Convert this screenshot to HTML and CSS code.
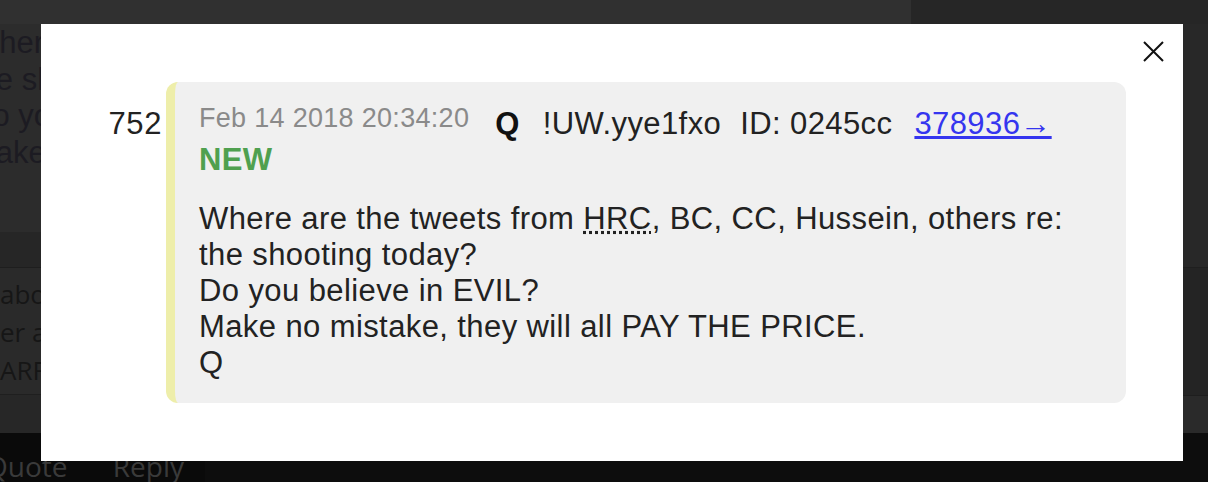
FILE: index.html
```html
<!DOCTYPE html>
<html lang="en">
<head>
    <meta charset="UTF-8">
    <meta name="viewport" content="width=device-width, initial-scale=1.0">
    <title>Q Post 752</title>
    <link rel="stylesheet" href="styles.css">
</head>
<body>
    <div class="page">
        <div class="topbar">
            <div class="topbar-main"></div>
            <div class="topbar-side"></div>
        </div>
        <div class="thread">
            <div class="thread-main">
                <div class="bg-post">
                    <div>Where are the tweets from HRC, BC, CC, Hussein, others re:</div>
                    <div>the shooting today?</div>
                    <div>Do you believe in EVIL?</div>
                    <div>Make no mistake, they will all PAY THE PRICE.</div>
                </div>
                <div class="bg-band"></div>
                <div class="bg-rows">
                    <div>about this post</div>
                    <div>er all the drops</div>
                    <div>ARFCOM thread</div>
                </div>
                <div class="bg-foot"></div>
            </div>
            <div class="thread-side">
                <div class="side-top"></div>
                <div class="side-mid"></div>
                <div class="side-foot"></div>
            </div>
        </div>
        <div class="bottombar">
            <div class="bar-actions">
                <span class="bar-quote">Quote</span>
                <span class="bar-reply">Reply</span>
            </div>
        </div>
    </div>

    <div class="modal">
        <button class="close" aria-label="Close">
            <svg width="21" height="21" viewBox="0 0 21 21">
                <path d="M1 1 L20 20 M20 1 L1 20" stroke="#111" stroke-width="2" fill="none"/>
            </svg>
        </button>
        <div class="post">
            <div class="post-num">752</div>
            <div class="post-box">
                <div class="post-head">
                    <span class="post-date">Feb 14 2018 20:34:20</span>
                    <span class="post-name">Q</span>
                    <span class="post-trip">!UW.yye1fxo</span>
                    <span class="post-id">ID: 0245cc</span>
                    <a class="post-link" href="#">378936→</a>
                </div>
                <div class="post-new">NEW</div>
                <div class="post-text">
                    Where are the tweets from <abbr title="Hillary Rodham Clinton">HRC</abbr>, BC, CC, Hussein, others re:<br>
                    the shooting today?<br>
                    Do you believe in EVIL?<br>
                    Make no mistake, they will all PAY THE PRICE.<br>
                    Q
                </div>
            </div>
        </div>
    </div>
</body>
</html>
```

FILE: styles.css
```css
body {
    margin: 0;
    padding: 0;
    width: 1208px;
    height: 482px;
    overflow: hidden;
    background-color: #2c2c2c;
    font-family: 'Liberation Sans', Arial, sans-serif;
}

.page {
    height: 482px;
    display: flex;
    flex-direction: column;
}

.topbar {
    height: 24px;
    display: flex;
}

.topbar-main {
    width: 911px;
    background-color: #303030;
}

.topbar-side {
    flex: 1;
    background-color: #262626;
}

.thread {
    height: 409px;
    display: flex;
}

.thread-main {
    width: 911px;
    display: flex;
    flex-direction: column;
}

.bg-post {
    height: 208px;
    padding-top: 1px;
    box-sizing: border-box;
    overflow: hidden;
    margin-left: -30px;
    white-space: nowrap;
    font-size: 31px;
    line-height: 36.5px;
    color: #1c1b22;
}

.bg-band {
    height: 35px;
    background-color: #262626;
    border-bottom: 1px solid #1e1e1e;
}

.bg-rows {
    height: 127px;
    box-sizing: border-box;
    padding-top: 7px;
    overflow: hidden;
    white-space: nowrap;
    background-color: #2a2a2a;
    border-bottom: 1px solid #1f1f1f;
    font-family: 'Open Sans', sans-serif;
    font-size: 26px;
    line-height: 38px;
    color: #161616;
}

.bg-foot {
    flex: 1;
    background-color: #272727;
}

.thread-side {
    flex: 1;
    display: flex;
    flex-direction: column;
}

.side-top {
    height: 243px;
    background-color: #282828;
    border-bottom: 1px solid #1f1f1f;
}

.side-mid {
    height: 127px;
    background-color: #242424;
    border-bottom: 1px solid #1e1e1e;
}

.side-foot {
    flex: 1;
    background-color: #2a2a2a;
}

.bottombar {
    height: 49px;
    display: flex;
    background-color: #0d0d0d;
}

.bar-actions {
    width: 205px;
    box-sizing: border-box;
    padding-top: 14px;
    background-color: #0a0a0a;
    font-family: 'Open Sans', sans-serif;
    font-size: 28px;
    line-height: 38px;
    color: #3a3a3a;
    white-space: nowrap;
}

.bar-quote {
    margin-left: -14px;
}

.bar-reply {
    margin-left: 38px;
}

/* modal */
.modal {
    position: absolute;
    left: 41px;
    top: 24px;
    width: 1142px;
    height: 437px;
    box-sizing: border-box;
    padding: 58px 57px 0 58px;
    background-color: #fff;
    color: #222;
}

.close {
    position: absolute;
    top: 17px;
    right: 19px;
    width: 21px;
    height: 21px;
    padding: 0;
    border: none;
    background: none;
    cursor: pointer;
}

.close svg {
    display: block;
}

.post {
    display: flex;
    align-items: flex-start;
}

.post-num {
    width: 67px;
    box-sizing: border-box;
    padding-top: 24px;
    padding-right: 4px;
    text-align: right;
    font-size: 31px;
    letter-spacing: 0.6px;
    line-height: 36px;
}

.post-box {
    flex: 1;
    padding: 24px 25px 22px 24px;
    background-color: #f0f0f0;
    border-left: 9px solid #eeeeaa;
    border-radius: 12px;
    font-size: 31px;
    letter-spacing: 0.4px;
    line-height: 36px;
}

.post-head {
    white-space: nowrap;
}

.post-date {
    margin-right: 17px;
    font-size: 27px;
    letter-spacing: 0.3px;
    line-height: 20px;
    vertical-align: 7px;
    color: #8a8a8a;
}

.post-name {
    margin-right: 14px;
    font-weight: 700;
    color: #111;
}

.post-trip {
    margin-right: 10px;
}

.post-id {
    margin-right: 13px;
}

.post-link {
    color: #3535ef;
    text-decoration: underline;
}

.post-new {
    font-weight: 700;
    color: #4fa04f;
}

.post-text {
    margin-top: 23px;
}

.post-text abbr {
    text-decoration: underline dotted;
}
```
